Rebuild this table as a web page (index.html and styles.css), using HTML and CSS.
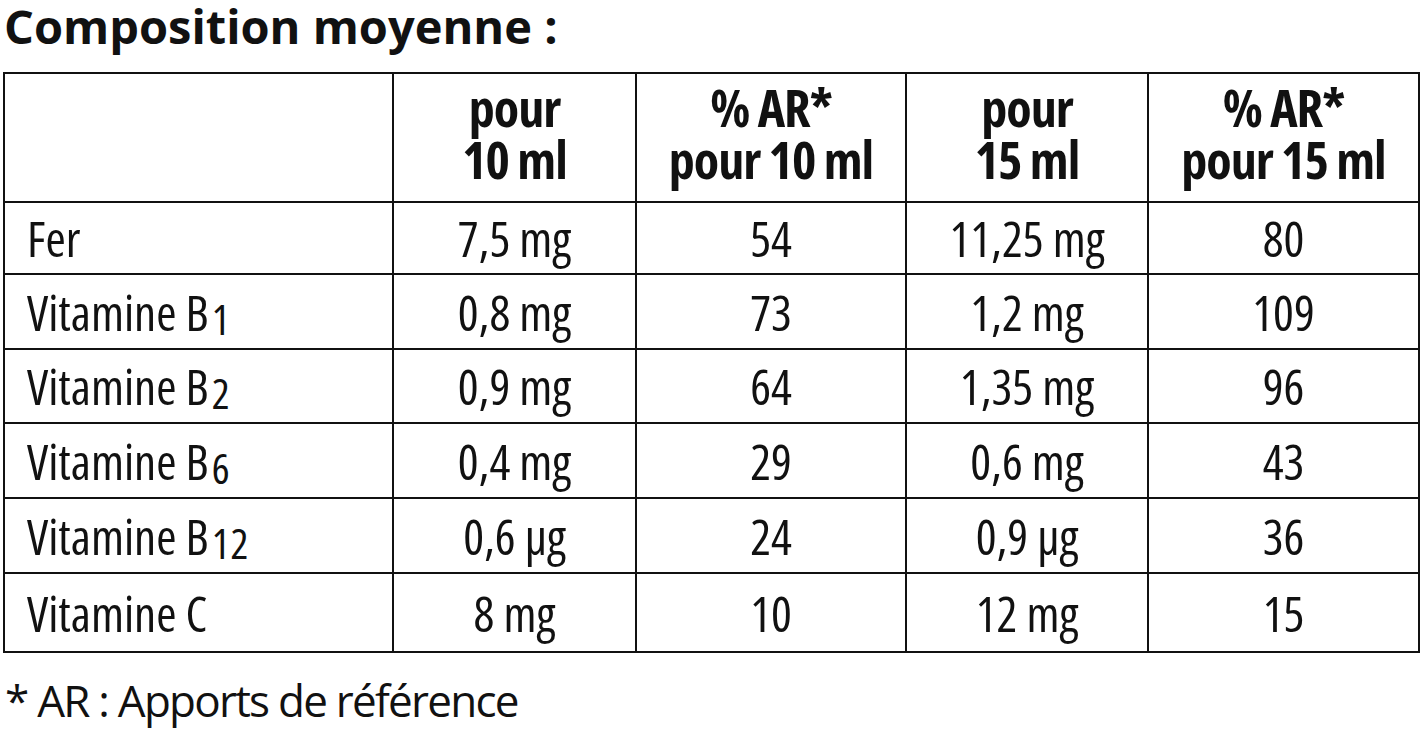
FILE: index.html
```html
<!DOCTYPE html>
<html lang="fr">
<head>
<meta charset="utf-8">
<title>Composition moyenne</title>
<link rel="stylesheet" href="styles.css">
</head>
<body>
<div class="page">
  <h1 class="title">Composition moyenne :</h1>
  <table class="comp">
    <colgroup>
      <col class="c1"><col class="c2"><col class="c3"><col class="c4"><col class="c5">
    </colgroup>
    <thead>
      <tr class="head">
        <th></th>
        <th>pour<br>10 ml</th>
        <th>% AR*<br>pour 10 ml</th>
        <th>pour<br>15 ml</th>
        <th>% AR*<br>pour 15 ml</th>
      </tr>
    </thead>
    <tbody>
      <tr class="r1"><td class="name">Fer</td><td>7,5 mg</td><td>54</td><td>11,25 mg</td><td>80</td></tr>
      <tr class="r2"><td class="name">Vitamine B<sub>1</sub></td><td>0,8 mg</td><td>73</td><td>1,2 mg</td><td>109</td></tr>
      <tr class="r3"><td class="name">Vitamine B<sub>2</sub></td><td>0,9 mg</td><td>64</td><td>1,35 mg</td><td>96</td></tr>
      <tr class="r4"><td class="name">Vitamine B<sub>6</sub></td><td>0,4 mg</td><td>29</td><td>0,6 mg</td><td>43</td></tr>
      <tr class="r5"><td class="name">Vitamine B<sub>12</sub></td><td>0,6 µg</td><td>24</td><td>0,9 µg</td><td>36</td></tr>
      <tr class="r6"><td class="name">Vitamine C</td><td>8 mg</td><td>10</td><td>12 mg</td><td>15</td></tr>
    </tbody>
  </table>
  <p class="note">* AR : Apports de référence</p>
</div>
</body>
</html>
```
FILE: styles.css
```css
html, body {
  margin: 0;
  padding: 0;
  background: #fff;
}
body {
  font-family: "Open Sans", "DejaVu Sans Condensed", sans-serif;
  color: #111;
}
.page {
  width: 1422px;
  height: 731px;
  overflow: hidden;
  padding: 2px 0 0 3px;
  box-sizing: border-box;
}
.title {
  margin: 0 0 21px 1px;
  font-size: 47px;
  line-height: 49px;
  font-weight: 700;
  font-stretch: 100%;
  white-space: nowrap;
}
.comp {
  border-collapse: collapse;
  table-layout: fixed;
  width: 1415px;
  border: 2.5px solid #111;
}
.c1 { width: 389px; }
.c2 { width: 243px; }
.c3 { width: 270px; }
.c4 { width: 242px; }
.c5 { width: 271px; }
.comp th, .comp td {
  border: 2.5px solid #111;
  padding: 0;
  text-align: center;
  vertical-align: middle;
}
.comp th {
  font-weight: 700;
  font-size: 52px;
  font-stretch: 75%;
  letter-spacing: -1px;
  line-height: 52px;
  padding-bottom: 10px;
}
.comp td {
  font-weight: 400;
  font-size: 49px;
  font-stretch: 78%;
  line-height: 50px;
}
.comp td.name {
  text-align: left;
  padding-left: 22px;
}
.comp sub {
  font-size: 0.86em;
  vertical-align: -0.1em;
  line-height: 0;
  margin-left: 3px;
  letter-spacing: 1px;
}
.head { height: 129px; }
.r1 { height: 72px; }
.r2 { height: 75px; }
.r3 { height: 74px; }
.r4 { height: 75px; }
.r5 { height: 75px; }
.r6 { height: 79px; }
.note {
  margin: 22px 0 0 2px;
  font-size: 44px;
  font-stretch: 88%;
  letter-spacing: -1.75px;
  line-height: 50px;
  white-space: nowrap;
}
```
